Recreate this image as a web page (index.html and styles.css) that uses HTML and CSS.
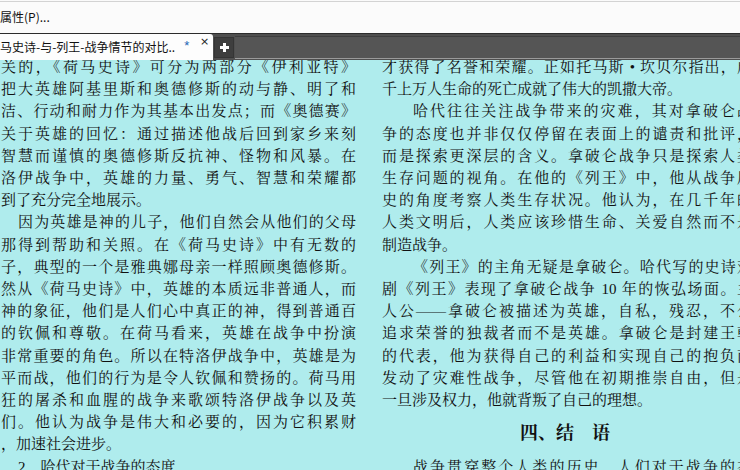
FILE: index.html
```html
<!DOCTYPE html>
<html lang="zh-CN">
<head>
<meta charset="utf-8">
<title>马史诗-与-列王-战争情节的对比</title>
<link rel="stylesheet" href="styles.css">
</head>
<body>
<div class="menubar"><span class="menu-item">属性(P)...</span></div>
<div class="tabbar">
  <div class="tab">
    <span class="tab-title">马史诗-与-列王-战争情节的对比..</span>
    <span class="tab-mod">*</span>
    <span class="tab-close">×</span>
  </div>
  <div class="tab-add">
    <svg width="11" height="11" viewBox="0 0 11 11"><path d="M5.5 1v9M1 5.5h9" stroke="#fff" stroke-width="3"/></svg>
  </div>
  <div class="tab-fill"></div>
</div>
<div class="doc">
  <div class="cols">
    <div class="col col-left">
      <div class="ln">关的，《荷马史诗》可分为两部分《伊利亚特》</div>
      <div class="ln">把大英雄阿基里斯和奥德修斯的动与静、明了和</div>
      <div class="ln">洁、行动和耐力作为其基本出发点；而《奥德赛》</div>
      <div class="ln">关于英雄的回忆：通过描述他战后回到家乡来刻</div>
      <div class="ln">智慧而谨慎的奥德修斯反抗神、怪物和风暴。在</div>
      <div class="ln">洛伊战争中，英雄的力量、勇气、智慧和荣耀都</div>
      <div class="end">到了充分完全地展示。</div>
      <div class="ln i1">因为英雄是神的儿子，他们自然会从他们的父母</div>
      <div class="ln">那得到帮助和关照。在《荷马史诗》中有无数的</div>
      <div class="ln">子，典型的一个是雅典娜母亲一样照顾奥德修斯。</div>
      <div class="ln">然从《荷马史诗》中，英雄的本质远非普通人，而</div>
      <div class="ln">神的象征，他们是人们心中真正的神，得到普通百</div>
      <div class="ln">的钦佩和尊敬。在荷马看来，英雄在战争中扮演</div>
      <div class="ln">非常重要的角色。所以在特洛伊战争中，英雄是为</div>
      <div class="ln">平而战，他们的行为是令人钦佩和赞扬的。荷马用</div>
      <div class="ln">狂的屠杀和血腥的战争来歌颂特洛伊战争以及英</div>
      <div class="ln">们。他认为战争是伟大和必要的，因为它积累财</div>
      <div class="end">，加速社会进步。</div>
      <div class="end i1">2．哈代对于战争的态度</div>
    </div>
    <div class="col col-right">
      <div class="ln">才获得了名誉和荣耀。正如托马斯 • 坎贝尔指出，成</div>
      <div class="end">千上万人生命的死亡成就了伟大的凯撒大帝。</div>
      <div class="ln i2">哈代往往关注战争带来的灾难，其对拿破仑战</div>
      <div class="ln">争的态度也并非仅仅停留在表面上的谴责和批评，</div>
      <div class="ln">而是探索更深层的含义。拿破仑战争只是探索人类</div>
      <div class="ln">生存问题的视角。在他的《列王》中，他从战争历</div>
      <div class="ln">史的角度考察人类生存状况。他认为，在几千年的</div>
      <div class="ln">人类文明后，人类应该珍惜生命、关爱自然而不是</div>
      <div class="end">制造战争。</div>
      <div class="ln i2">《列王》的主角无疑是拿破仑。哈代写的史诗戏</div>
      <div class="ln">剧《列王》表现了拿破仑战争 10 年的恢弘场面。主</div>
      <div class="ln">人公——拿破仑被描述为英雄，自私，残忍，不公</div>
      <div class="ln">追求荣誉的独裁者而不是英雄。拿破仑是封建王朝</div>
      <div class="ln">的代表，他为获得自己的利益和实现自己的抱负而</div>
      <div class="ln">发动了灾难性战争，尽管他在初期推崇自由，但是</div>
      <div class="end">一旦涉及权力，他就背叛了自己的理想。</div>
      <h2 class="heading">四、结　语</h2>
      <div class="ln i2">战争贯穿整个人类的历史，人们对于战争的态</div>
    </div>
  </div>
</div>
</body>
</html>
```
FILE: styles.css
```css
html, body {
  margin: 0;
  padding: 0;
}
body {
  width: 740px;
  height: 470px;
  overflow: hidden;
  background: #fafafa;
  font-family: "Noto Sans CJK SC", "Liberation Sans", sans-serif;
}
.menubar {
  margin-top: 1px;
  border-top: 1px solid #d3d3d3;
  height: 31px;
  background: #fbfbfb;
  display: flex;
  align-items: center;
  font-size: 12px;
  color: #111;
}
.menu-item {
  padding-left: 0;
  margin-top: -2px;
}
.tabbar {
  height: 26px;
  background: #4f4f4f;
  border-top: 1px solid #2c2c2c;
  display: flex;
  align-items: stretch;
}
.tab {
  width: 213px;
  flex-shrink: 0;
  background: #fdfdfd;
  border-top-right-radius: 3px;
  display: flex;
  align-items: center;
  font-size: 12px;
  color: #111;
  position: relative;
}
.tab-title {
  white-space: nowrap;
  margin-top: -2px;
}
.tab-mod {
  color: #2466b5;
  font-family: "Liberation Sans", sans-serif;
  font-size: 13px;
  margin-left: 9px;
  margin-top: -3px;
}
.tab-close {
  position: absolute;
  left: 200px;
  top: 2px;
  font-size: 11px;
  line-height: 11px;
  font-family: "DejaVu Sans", sans-serif;
  color: #222;
}
.tab-add {
  width: 18px;
  height: 19px;
  margin: 3px 1px 0 1px;
  background: #3e3e3e;
  border: 1px solid #353535;
  display: flex;
  align-items: center;
  justify-content: center;
  flex-shrink: 0;
}
.tab-fill {
  flex: 1;
  margin-top: 2px;
  margin-bottom: 1px;
  background: #555;
  border-top: 1px solid #3e3e3e;
  border-bottom: 1px solid #9a9a9a;
}
.doc {
  height: 411px;
  background: #afeced;
  overflow: hidden;
  color: #111;
}
.cols {
  display: flex;
  margin-top: -4px;
  font-family: "Liberation Serif", "Noto Serif CJK SC", "Noto Sans CJK SC", serif;
  font-size: 15px;
  line-height: 22.2px;
}
.col {
  flex-shrink: 0;
}
.col-left {
  width: 355px;
  margin-left: 1px;
}
.col-right {
  width: 370px;
  margin-left: 26px;
}
.ln {
  text-align: justify;
  text-align-last: justify;
  white-space: nowrap;
}
.end {
  text-align: left;
  white-space: nowrap;
}
.i1 {
  padding-left: 17px;
}
.i2 {
  padding-left: 31px;
}
.heading {
  margin: 0;
  height: 44.4px;
  line-height: 44.4px;
  font-size: 18px;
  font-weight: bold;
  text-align: center;
  padding-right: 4px;
}
```
